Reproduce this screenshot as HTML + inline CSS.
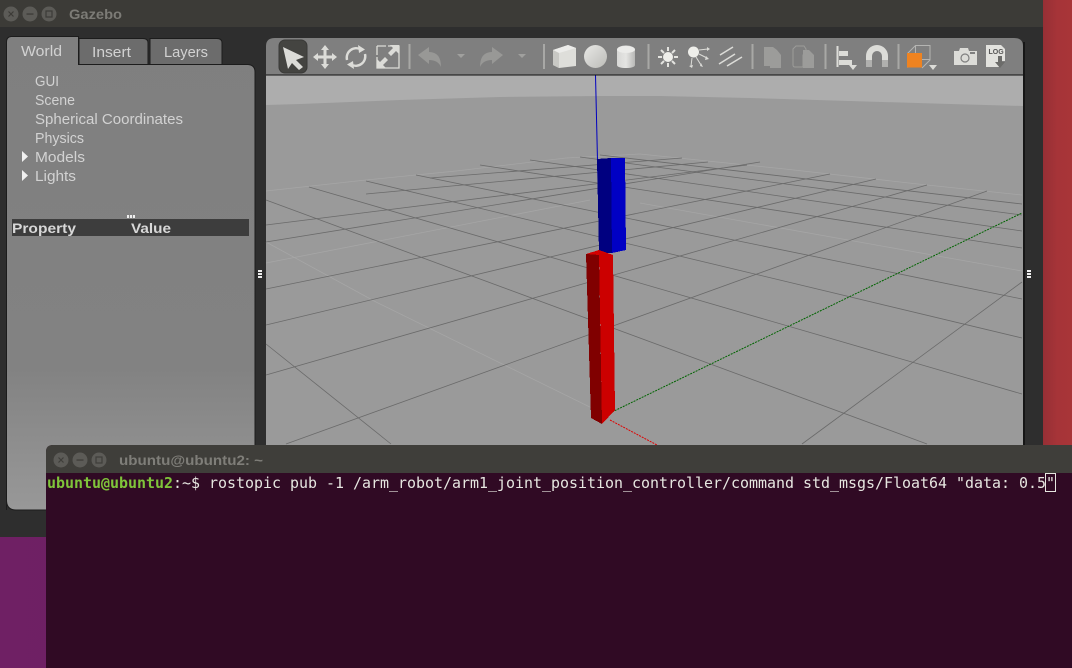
<!DOCTYPE html>
<html><head><meta charset="utf-8"><title>Gazebo</title>
<style>
html,body{margin:0;padding:0;background:#2d2d2d;width:1072px;height:668px;overflow:hidden}
svg{display:block}
.s{font-family:"Liberation Sans",sans-serif;font-size:14.5px;fill:#d2d2d2}
.g line{fill:none;stroke:#6a6a6a;stroke-width:.8}
.l line{stroke:#a6a6a6;stroke-width:.8;fill:none}
.i{fill:#dcdcd8}
.d{fill:#a0a09e}
</style></head><body>
<svg width="1072" height="668" viewBox="0 0 1072 668" xmlns="http://www.w3.org/2000/svg">
<defs>
<linearGradient id="red" x1="0" x2="1" y1="0" y2="0"><stop offset="0" stop-color="#962f35"/><stop offset="0.5" stop-color="#a63438"/><stop offset="1" stop-color="#a83538"/></linearGradient>
<linearGradient id="pur" x1="0" x2="1" y1="0" y2="0"><stop offset="0" stop-color="#6f2064"/><stop offset="1" stop-color="#64205c"/></linearGradient>
<linearGradient id="panel" x1="0" x2="0" y1="0" y2="1"><stop offset="0" stop-color="#7f7f7f"/><stop offset="0.7" stop-color="#828282"/><stop offset="1" stop-color="#989898"/></linearGradient>
<linearGradient id="sph" x1="0" x2="1" y1="0" y2="1"><stop offset="0" stop-color="#e8e8e6"/><stop offset="1" stop-color="#bcbcb8"/></linearGradient>
<linearGradient id="cyl" x1="0" x2="1" y1="0" y2="0"><stop offset="0" stop-color="#d8d8d6"/><stop offset="0.5" stop-color="#e4e4e2"/><stop offset="1" stop-color="#b8b8b6"/></linearGradient>
</defs>
<!-- desktop -->
<rect x="0" y="0" width="1072" height="668" fill="url(#pur)"/>
<rect x="1043" y="0" width="29" height="445" fill="url(#red)"/>
<!-- gazebo window -->
<path d="M0 0H1040L1043 3V537H0Z" fill="#2e2e2e"/>
<rect x="0" y="0" width="1043" height="27" fill="#3c3b37"/>
<circle cx="11" cy="14" r="7.5" fill="#5c5b57"/><circle cx="30" cy="14" r="7.5" fill="#5c5b57"/><circle cx="49" cy="14" r="7.5" fill="#5c5b57"/>
<path d="M8.5 11.5l5 5M13.5 11.5l-5 5" stroke="#3c3b37" stroke-width="1.2"/><rect x="26.5" y="13.4" width="7" height="1.3" fill="#3c3b37"/><rect x="46" y="11" width="6" height="6" fill="none" stroke="#3c3b37" stroke-width="1.2"/>
<text x="69" y="19" font-family="Liberation Sans,sans-serif" font-size="14" font-weight="bold" fill="#7c7b76" textLength="53" lengthAdjust="spacingAndGlyphs">Gazebo</text>

<!-- left panel -->
<path d="M79 38.5L143 38.5Q148 38.500 148 43V65H79Z" fill="#6c6c6c" stroke="#1c1c1c"/>
<path d="M150 38.500H217Q222 38.500 222 43V65H150Z" fill="#6c6c6c" stroke="#1c1c1c"/>
<path d="M6.500 510V42Q6.500 37 11 36.500H78.500V64.500H248Q255 65 255 72V497Q255 510 245 510H16Q6.500 510 6.500 500Z" fill="url(#panel)" stroke="#1c1c1c"/>
<text class="s" x="21" y="56" textLength="41" lengthAdjust="spacingAndGlyphs">World</text>
<text class="s" x="92" y="57" textLength="39" lengthAdjust="spacingAndGlyphs">Insert</text>
<text class="s" x="164" y="57" textLength="44" lengthAdjust="spacingAndGlyphs">Layers</text>
<text class="s" x="35" y="86" textLength="24" lengthAdjust="spacingAndGlyphs">GUI</text>
<text class="s" x="35" y="105" textLength="40" lengthAdjust="spacingAndGlyphs">Scene</text>
<text class="s" x="35" y="124" textLength="148" lengthAdjust="spacingAndGlyphs">Spherical Coordinates</text>
<text class="s" x="35" y="143" textLength="49" lengthAdjust="spacingAndGlyphs">Physics</text>
<text class="s" x="35" y="162" textLength="50" lengthAdjust="spacingAndGlyphs">Models</text>
<text class="s" x="35" y="181" textLength="41" lengthAdjust="spacingAndGlyphs">Lights</text>
<path d="M22 151l6 5.500-6 5.500ZM22 170l6 5.500-6 5.500Z" fill="#f0f0f0"/>
<rect x="127" y="215" width="8" height="3" fill="#eee"/><path d="M129.500 215v3M132.500 215v3" stroke="#888"/>
<rect x="12" y="219" width="237" height="17" fill="#3d3d3d"/>
<text x="12" y="233" font-family="Liberation Sans,sans-serif" font-size="14" font-weight="bold" fill="#d8d8d8" textLength="64" lengthAdjust="spacingAndGlyphs">Property</text>
<text x="131" y="233" font-family="Liberation Sans,sans-serif" font-size="14" font-weight="bold" fill="#d8d8d8" textLength="40" lengthAdjust="spacingAndGlyphs">Value</text>
<path d="M258 270h4v2h-4zM258 273h4v2h-4zM258 276h4v2h-4z" fill="#eee"/>
<path d="M1027 270h4v2h-4zM1027 273h4v2h-4zM1027 276h4v2h-4z" fill="#eee"/>

<!-- viewport -->
<rect x="266" y="75" width="757" height="372" fill="#9a9a9a"/>
<polygon points="266,75 1023,75 1023,106 950,104 850,101 750,98 660,96 600,96 500,97 400,100 300,104 266,105" fill="#adadad"/>
<g class="l">
<line x1="266" y1="191" x2="366" y2="180"/><line x1="366" y1="180" x2="456" y2="171"/><line x1="456" y1="171" x2="566" y2="158"/><line x1="566" y1="158" x2="640" y2="154"/><line x1="640" y1="154" x2="785" y2="169"/><line x1="785" y1="169" x2="927" y2="185"/><line x1="927" y1="185" x2="1022" y2="195"/>
<line x1="266" y1="242" x2="376" y2="302"/><line x1="376" y1="302" x2="600" y2="412"/>
<line x1="266" y1="263" x2="590" y2="200"/>
<line x1="640" y1="203" x2="1022" y2="271"/>
</g>
<g class="g">
<line x1="286" y1="444" x2="987" y2="191"/>
<line x1="266" y1="375" x2="927" y2="185"/>
<line x1="266" y1="325" x2="876" y2="179"/>
<line x1="266" y1="289" x2="830" y2="174"/>
<line x1="266" y1="242" x2="760" y2="162"/>
<line x1="266" y1="225" x2="747" y2="165"/>
<line x1="366" y1="194" x2="708" y2="162"/>
<line x1="430" y1="178" x2="682" y2="158"/>
<line x1="266" y1="200" x2="927" y2="444"/>
<line x1="309" y1="187" x2="1022" y2="394"/>
<line x1="366" y1="181" x2="1022" y2="338"/>
<line x1="416" y1="175" x2="1022" y2="299"/>
<line x1="480" y1="165" x2="1022" y2="248"/>
<line x1="530" y1="160" x2="1022" y2="231"/>
<line x1="580" y1="157" x2="1022" y2="215"/>
<line x1="600" y1="155" x2="1022" y2="204"/>
<line x1="266" y1="344" x2="391" y2="444"/>
<line x1="1022" y1="282" x2="802" y2="444"/>
</g>
<line x1="595.500" y1="75" x2="598" y2="182" stroke="#0000c0" stroke-width="1"/>
<line x1="612" y1="412" x2="1022" y2="213" stroke="#006400" stroke-width="1" stroke-dasharray="2 1"/>
<line x1="610" y1="420" x2="657" y2="445" stroke="#e00000" stroke-width="1" stroke-dasharray="2 1"/>
<g shape-rendering="crispEdges">
<polygon points="597,159 611,158 612,253 599,253" fill="#000080"/>
<polygon points="611,158 625,158 626,250 612,253" fill="#0000c4"/>
<polygon points="586,254 599,250 613,255 599,256" fill="#d40000"/>
<polygon points="586,254 599,255 602,424 591,418" fill="#800000"/>
<polygon points="599,252 613,255 615,410 602,424" fill="#cc0000"/>
</g>

<!-- toolbar -->
<path d="M266 75V46Q266 38 275 38H1014Q1023 38 1023 46V75Z" fill="#7f7f7f"/>
<rect x="266" y="74.500" width="757" height="1" fill="#111"/>
<rect x="1023" y="42" width="2" height="405" fill="#161616"/>
<rect x="279" y="40" width="28" height="33" rx="6" fill="#444441" stroke="#3a3a38"/>
<!-- select arrow -->
<path class="i" d="M283 47L304 57L296 60L303 67L299 70L292 63L288 69Z"/>
<!-- translate -->
<path class="i" d="M325 45l4 5h-2.500v5.500h5.500V53l5 4-5 4v-2.500h-5.500V64h2.500l-4 5-4-5h2.500v-5.500H318V61l-5-4 5-4v2.500h5.500V50H321Z"/>
<!-- rotate -->
<path d="M347 60a9.500 9.500 0 0 1 14-10.500M365 54a9.500 9.500 0 0 1-14 10.500" fill="none" stroke="#dcdcd8" stroke-width="2.400"/>
<path class="i" d="M358 45l7 4.500-6 3.500ZM354 69l-7-4.500 6-3.500Z"/>
<!-- scale -->
<path d="M388 46h11v22h-22V57" fill="none" stroke="#dcdcd8" stroke-width="1.300"/>
<path d="M377 46h9M377 46v9" fill="none" stroke="#dcdcd8" stroke-width="1.300"/>
<path class="i" d="M399 45v9l-3-3-5 5-3-3 5-5-3-3ZM377 68v-9l3 3 5-5 3 3-5 5 3 3Z"/>
<rect x="408.500" y="44" width="2" height="25" fill="#a8a8a6"/>
<!-- undo/redo -->
<path class="d" d="M418 55l11-8v5q12 0 12 15-3-7-12-7v4Z" opacity=".75"/>
<path class="d" d="M503 55l-11-8v5q-12 0-12 15 3-7 12-7v4Z" opacity=".75"/>
<path class="d" d="M457 54h8l-4 4ZM518 54h8l-4 4Z"/>
<rect x="543" y="44" width="2" height="25" fill="#a8a8a6"/>
<!-- box -->
<path d="M553 50L568 45L576 48V66L559 68L553 65Z" fill="#dededa"/>
<path d="M553 50L568 45L576 48L559 53Z" fill="#ececea"/>
<path d="M553 50L559 53V68L553 65Z" fill="#c8c8c4"/>
<circle cx="595.500" cy="56.500" r="11.500" fill="url(#sph)"/>
<path d="M617 50c0-6 18-6 18 0v15c0 2-4 3-9 3s-9-1-9-3Z" fill="url(#cyl)"/><ellipse cx="626" cy="49.500" rx="9" ry="3.500" fill="#ebebe9"/>
<rect x="647.500" y="44" width="2" height="25" fill="#a8a8a6"/>
<!-- sun -->
<circle cx="668" cy="57" r="5" fill="#eeeeea"/>
<path d="M668 47v4M668 63v4M658 57h4M674 57h4M661 50l3 3M672 61l3 3M675 50l-3 3M664 61l-3 3" stroke="#e4e4e0" stroke-width="2"/>
<!-- point/spot -->
<circle cx="693.500" cy="52" r="5.500" fill="#eeeeea"/>
<path d="M699 50l9-1M699 54l8 4M696 57l5 8M692 58l-1 8" stroke="#dcdcd8" stroke-width="1"/>
<path class="i" d="M707 47l3 2-3 2ZM706 56l3 3-4 1ZM700 66l3 1-2-4ZM689 66l3 2 1-3Z"/>
<!-- directional -->
<path d="M720 55l13-8M719 64l16-10M727 66l15-9" stroke="#dcdcd8" stroke-width="1.600"/>
<rect x="751.500" y="44" width="2" height="25" fill="#a8a8a6"/>
<!-- copy/paste -->
<path d="M764 47h9l4 3 4 5v13h-11v-2h-6Z" fill="#9c9c9a"/>
<path d="M796 46h8l2 3v6h-3v12h-8q-2 0-2-2V49Z" fill="none" stroke="#9c9c9a" stroke-width="1"/>
<path d="M803 50h6l5 5v13h-11Z" fill="#9c9c9a"/>
<rect x="824.500" y="44" width="2" height="25" fill="#a8a8a6"/>
<!-- align -->
<rect x="836.500" y="46" width="2" height="21" fill="#dcdcd8"/><rect x="839" y="51" width="9" height="5" fill="#dcdcd8"/><rect x="839" y="60" width="13" height="5" fill="#dcdcd8"/>
<path class="i" d="M849 65h8l-4 5Z"/>
<!-- magnet -->
<path d="M866 67v-11a11 11 0 0 1 22 0v11h-6v-11a5 5 0 0 0-10 0v11Z" fill="#dcdcd8"/>
<rect x="866" y="60" width="6" height="7" fill="#b0b0ae"/><rect x="882" y="60" width="6" height="7" fill="#b0b0ae"/>
<rect x="897.500" y="44" width="2" height="25" fill="#a8a8a6"/>
<!-- view -->
<path d="M907.500 53.500l8-8h14.500v14.500l-8 8M915.500 45.500v14h14.500M915.500 59.500l-8 8" fill="none" stroke="#b4b4b2" stroke-width="1"/>
<rect x="907" y="53" width="15" height="14.500" fill="#ef8320"/>
<path class="i" d="M929 65h8l-4 5Z"/>
<!-- camera -->
<path d="M954 51h5l1-3h8l1 3h8v14h-23Z" fill="#dcdcd8"/>
<circle cx="965" cy="58" r="4" fill="none" stroke="#7f7f7f" stroke-width="1.200"/><rect x="970" y="52" width="5" height="2" fill="#7f7f7f"/>
<!-- log -->
<path d="M986 45h15l4 4v12h-5v6h-14Z" fill="#e2e2de"/>
<text x="988.500" y="54" font-family="Liberation Sans,sans-serif" font-size="7" font-weight="bold" fill="#555">LOG</text>
<path d="M998 56h4v6h3l-5 6-5-6h3Z" fill="#6c6c6a"/>

<!-- terminal -->
<path d="M46 668V452Q46 445 53 445H1072V668Z" fill="#300a24"/>
<path d="M46 473V452Q46 445 53 445H1072V473Z" fill="#3f3e3a"/>
<circle cx="61" cy="460" r="7.500" fill="#5c5b57"/><circle cx="80" cy="460" r="7.500" fill="#5c5b57"/><circle cx="99" cy="460" r="7.500" fill="#5c5b57"/>
<path d="M58.500 457.500l5 5M63.500 457.500l-5 5" stroke="#3f3e3a" stroke-width="1.200"/><rect x="76.500" y="459.400" width="7" height="1.300" fill="#3f3e3a"/><rect x="96" y="457" width="6" height="6" fill="none" stroke="#3f3e3a" stroke-width="1.200"/>
<text x="119" y="465" font-family="Liberation Sans,sans-serif" font-size="14" font-weight="bold" fill="#7f7e79" textLength="144" lengthAdjust="spacingAndGlyphs">ubuntu@ubuntu2: ~</text>
<g font-family="DejaVu Sans Mono,Liberation Mono,monospace" font-size="15">
<text x="47" y="488" font-weight="bold" fill="#7fc43a" textLength="126" lengthAdjust="spacingAndGlyphs">ubuntu@ubuntu2</text>
<text x="173" y="488" fill="#e6e6e0" textLength="27" lengthAdjust="spacingAndGlyphs">:~$</text>
<text x="209" y="488" fill="#e6e6e0" textLength="846" lengthAdjust="spacingAndGlyphs">rostopic pub -1 /arm_robot/arm1_joint_position_controller/command std_msgs/Float64 "data: 0.5"</text>
</g>
<rect x="1045.500" y="473.500" width="10" height="18" fill="none" stroke="#e6e6e0" stroke-width="1"/>
</svg>
</body></html>
